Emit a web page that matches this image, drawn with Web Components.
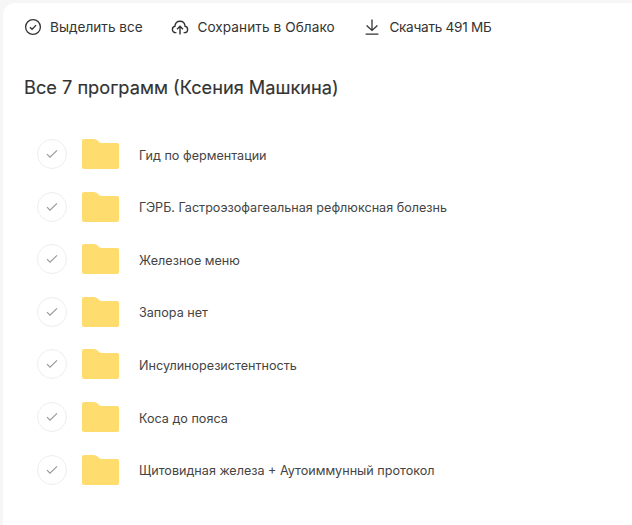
<!DOCTYPE html>
<html><head><meta charset="utf-8">
<style>
html,body{margin:0;padding:0;background:#f6f6f6;height:100%;overflow:hidden}
body{font-family:Inter,Roboto,"Liberation Sans",sans-serif}
</style></head><body>
<file-panel>
 <tool-bar>
  <tool-btn label="Выделить все" icon="check" style="--ls:.02px"></tool-btn>
  <tool-btn label="Сохранить в Облако" icon="cloud" style="--ls:.08px"></tool-btn>
  <tool-btn label="Скачать 491 МБ" icon="down" style="--ls:-.28px"></tool-btn>
 </tool-bar>
 <panel-title>Все 7 программ (Ксения Машкина)</panel-title>
 <folder-list>
  <folder-row>Гид по ферментации</folder-row>
  <folder-row>ГЭРБ. Гастроэзофагеальная рефлюксная болезнь</folder-row>
  <folder-row>Железное меню</folder-row>
  <folder-row>Запора нет</folder-row>
  <folder-row>Инсулинорезистентность</folder-row>
  <folder-row>Коса до пояса</folder-row>
  <folder-row>Щитовидная железа + Аутоиммунный протокол</folder-row>
 </folder-list>
</file-panel>
<script>
const def=(n,html,init)=>customElements.define(n,class extends HTMLElement{
 constructor(){super();this.attachShadow({mode:'open'}).innerHTML=html;}
 connectedCallback(){init&&init(this)}
});
const icons={
check:'<circle cx="9" cy="9" r="7.4" fill="none" stroke="#333" stroke-width="1.3"/><path d="M5.9 9.2l2.2 2.1 4-4.2" fill="none" stroke="#333" stroke-width="1.3"/>',
cloud:'<path d="M5.4 14.6H4.6C2.8 14.6 1.4 13.1 1.4 11.4c0-1.5 1-2.8 2.5-3.1C4.2 5.2 6.4 3.2 9 3.2c2.6 0 4.8 2 5.1 5.1 1.5.3 2.5 1.6 2.5 3.1 0 1.7-1.4 3.2-3.2 3.2h-.8" fill="none" stroke="#333" stroke-width="1.4"/><path d="M9 16.6V8.4M6 11.2l3-3 3 3" fill="none" stroke="#333" stroke-width="1.4"/>',
down:'<path d="M9 1.5v10.5M3.6 7.4L9 12.4l5.4-5M2.6 16.2h12.8" fill="none" stroke="#333" stroke-width="1.3"/>'
};
def('file-panel',`<style>:host{display:block;box-sizing:border-box;height:525px;margin:3px 0 0 3px;padding:0 0 0 21px;background:#fff;border-radius:12px 0 0 0}</style><slot></slot>`);
def('tool-bar',`<style>:host{display:flex;height:48px;align-items:center;gap:28.6px}</style><slot></slot>`);
def('tool-btn',`<style>:host{display:inline-flex;align-items:center;gap:8px;font-size:13.6px;color:#333;letter-spacing:var(--ls,0)}svg{width:18px;height:18px;display:block}</style><svg viewBox="0 0 18 18"></svg><span></span>`,el=>{
 el.shadowRoot.querySelector('span').textContent=el.getAttribute('label');
 el.shadowRoot.querySelector('svg').innerHTML=icons[el.getAttribute('icon')];
});
def('panel-title',`<style>:host{display:block;margin-top:22px;font-size:18.2px;line-height:28px;font-weight:400;color:#333;-webkit-text-stroke:.15px #333}</style><slot></slot>`);
def('folder-list',`<style>:host{display:flex;flex-direction:column;margin-top:26.8px;padding-left:13px}</style><slot></slot>`);
def('folder-row',`<style>
:host{display:flex;align-items:center;height:52.6px;font-size:12.6px;color:#444}
.c{box-sizing:border-box;width:30px;height:30px;border:1px solid #eee;border-radius:50%;display:flex;align-items:center;justify-content:center;margin-right:15px;flex:none}
.f{width:37px;height:30px;margin-right:20px;flex:none;display:block}
span{padding-top:2px}
</style><div class="c"><svg width="12" height="10" viewBox="0 0 12 10"><path d="M1 5.2l3 3L11 1.4" fill="none" stroke="#999" stroke-width="1.2"/></svg></div>
<svg class="f" viewBox="0 0 37 30"><path d="M0 2a2 2 0 0 1 2-2h10c2 0 3 1 4 2s2 2 4 2h15a2 2 0 0 1 2 2v22a2 2 0 0 1-2 2H2a2 2 0 0 1-2-2z" fill="#ffdc6e"/></svg><span><slot></slot></span>`);
</script></body></html>
